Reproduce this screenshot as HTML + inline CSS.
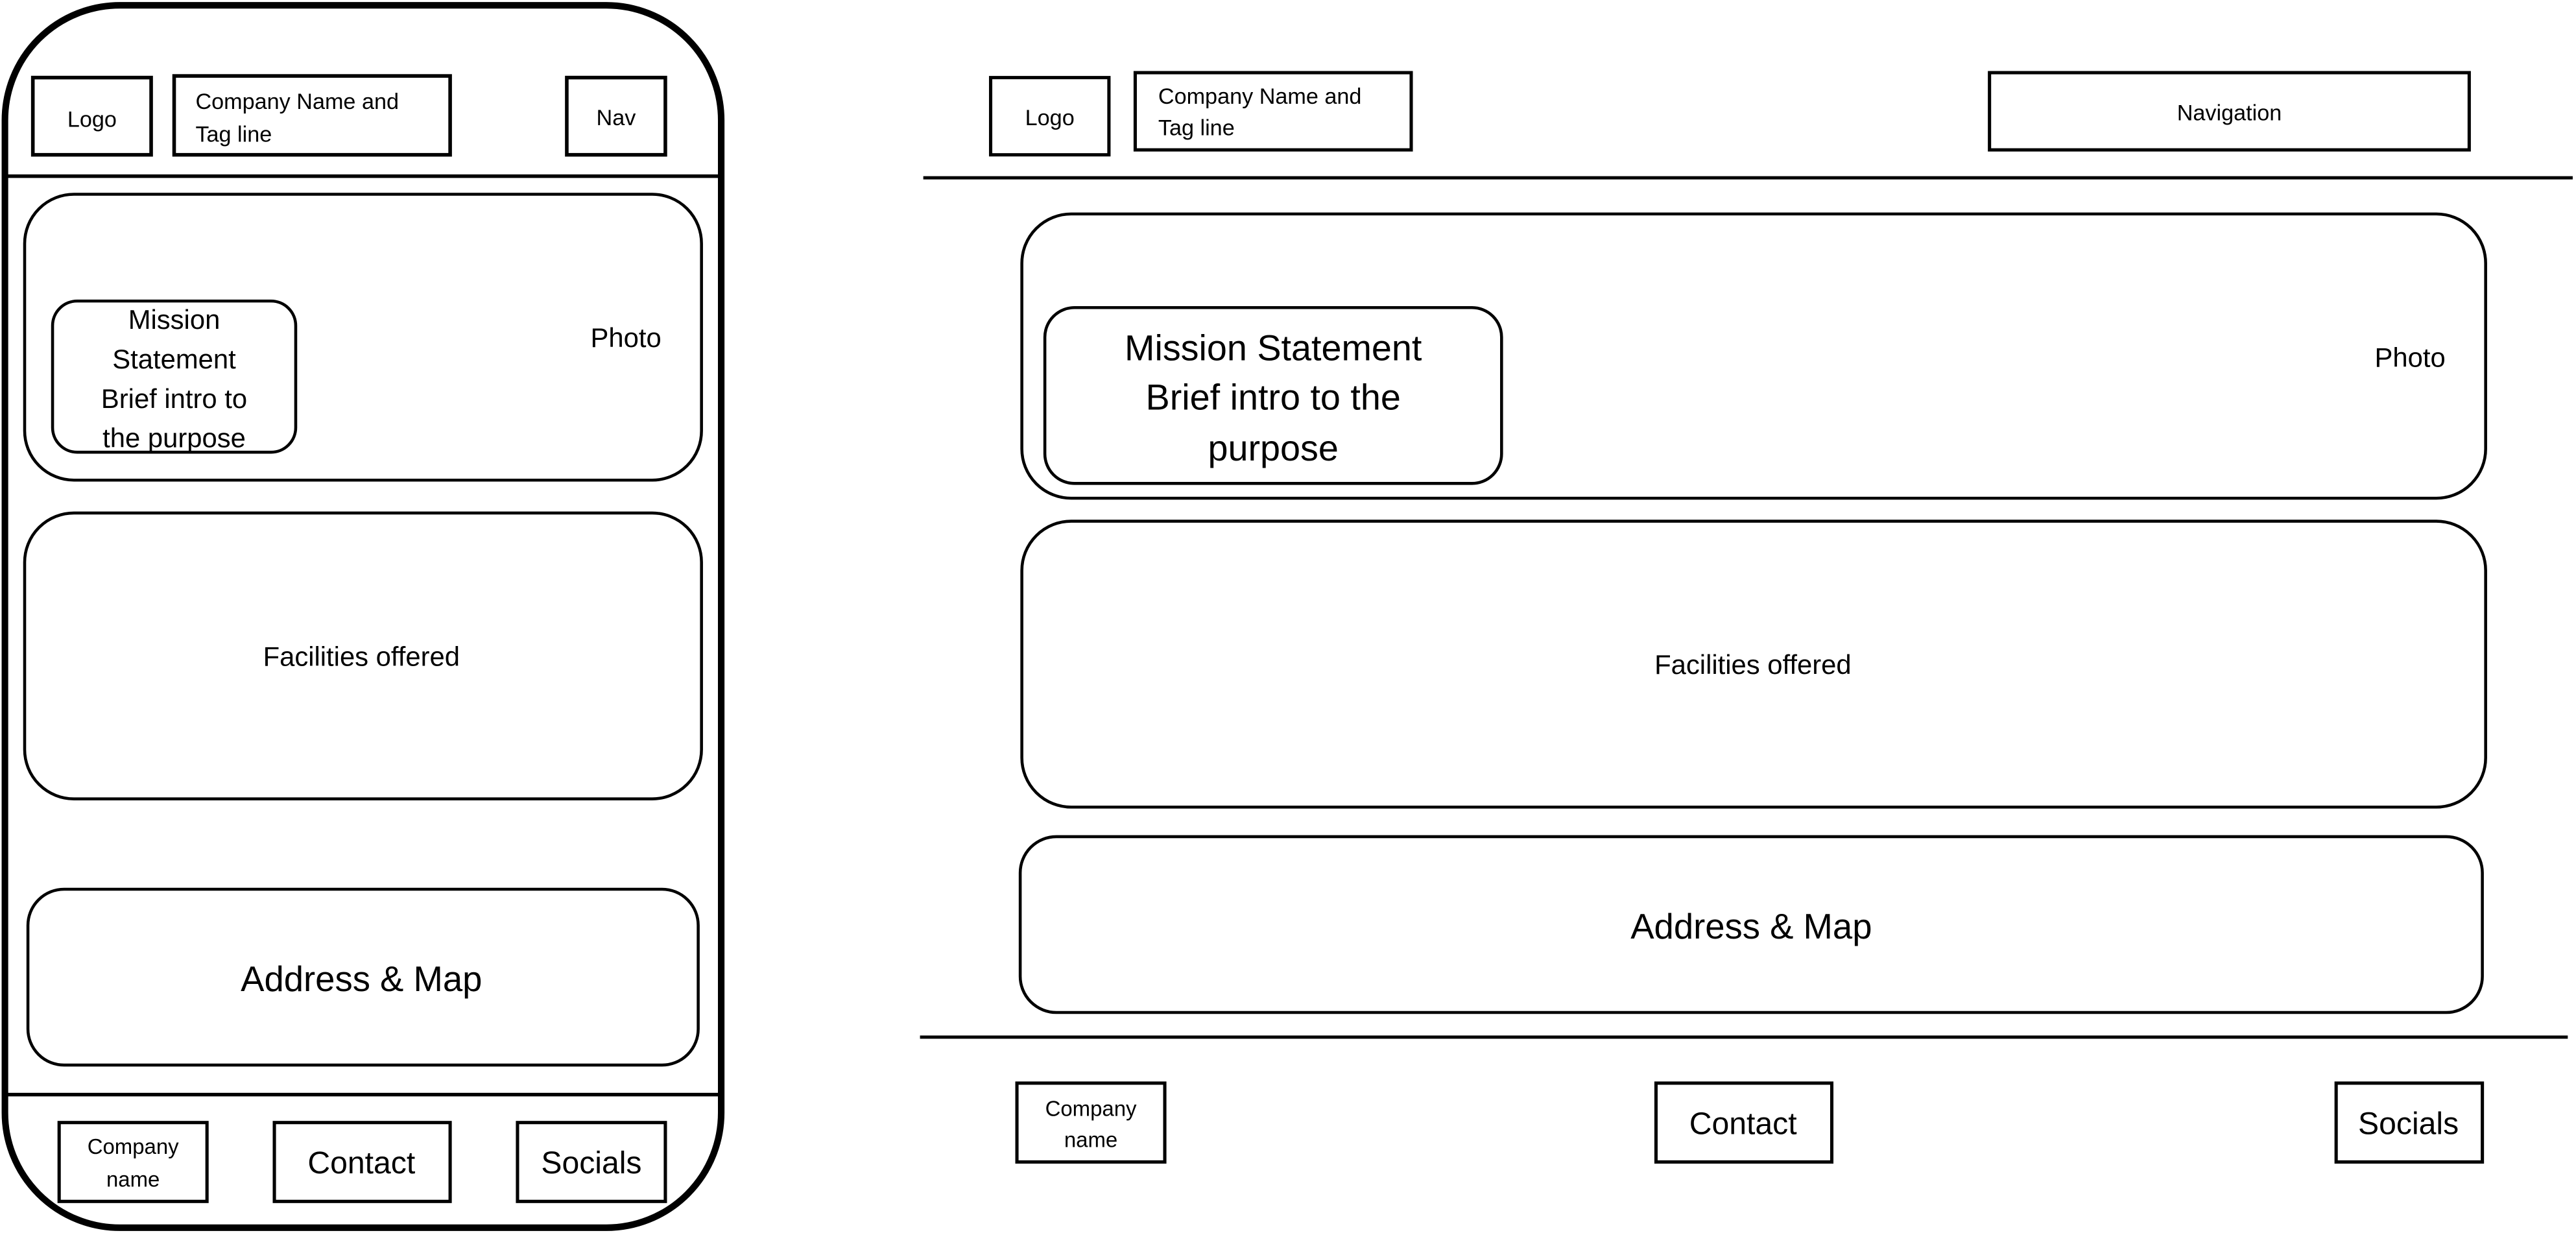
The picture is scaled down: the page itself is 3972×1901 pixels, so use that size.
<!DOCTYPE html>
<html><head><meta charset="utf-8"><style>
html,body{margin:0;padding:0;background:#fff;}
svg{display:block;}
text{font-family:"Liberation Sans",sans-serif;fill:#000;}
</style></head><body>
<svg width="3972" height="1901" viewBox="0 0 1568 750" xmlns="http://www.w3.org/2000/svg">
<rect width="1568" height="750" fill="#fff"/>
<g fill="none" stroke="#000">
<!-- phone -->
<rect x="3" y="3" width="436" height="744" rx="70" ry="70" stroke-width="4"/>
<line x1="3" y1="107" x2="439" y2="107" stroke-width="2.2"/>
<line x1="3" y1="666" x2="439" y2="666" stroke-width="2.2"/>
<rect x="20" y="47" width="72" height="47" stroke-width="2.2"/>
<rect x="106" y="46" width="168" height="48" stroke-width="2.2"/>
<rect x="345" y="47" width="60" height="47" stroke-width="2.2"/>
<rect x="15" y="118" width="412" height="174" rx="30" stroke-width="1.8"/>
<rect x="32" y="183" width="148" height="92" rx="15" stroke-width="1.8"/>
<rect x="15" y="312" width="412" height="174" rx="30" stroke-width="1.8"/>
<rect x="17" y="541" width="408" height="107" rx="22" stroke-width="1.8"/>
<rect x="36" y="683" width="90" height="48" stroke-width="2"/>
<rect x="167" y="683" width="107" height="48" stroke-width="2"/>
<rect x="315" y="683" width="90" height="48" stroke-width="2"/>
<!-- desktop -->
<rect x="603" y="47" width="72" height="47" stroke-width="2"/>
<rect x="691" y="44" width="168" height="47" stroke-width="2"/>
<rect x="1211" y="44" width="292" height="47" stroke-width="2"/>
<line x1="562" y1="108" x2="1566" y2="108" stroke-width="2"/>
<rect x="622" y="130" width="891" height="173" rx="30" stroke-width="1.8"/>
<rect x="636" y="187" width="278" height="107" rx="18" stroke-width="1.8"/>
<rect x="622" y="317" width="891" height="174" rx="30" stroke-width="1.8"/>
<rect x="621" y="509" width="890" height="107" rx="22" stroke-width="1.8"/>
<line x1="560" y1="631" x2="1563" y2="631" stroke-width="2"/>
<rect x="619" y="659" width="90" height="48" stroke-width="2"/>
<rect x="1008" y="659" width="107" height="48" stroke-width="2"/>
<rect x="1422" y="659" width="89" height="48" stroke-width="2"/>
</g>
<g text-anchor="middle">
<text x="56" y="77" font-size="13.5">Logo</text>
<text x="375" y="76" font-size="13.5">Nav</text>
<text x="106" y="200" font-size="16.5">Mission</text>
<text x="106" y="224" font-size="16.5">Statement</text>
<text x="106" y="248" font-size="16.5">Brief intro to</text>
<text x="106" y="272" font-size="16.5">the purpose</text>
<text x="381" y="211" font-size="16.5">Photo</text>
<text x="220" y="405" font-size="16.5">Facilities offered</text>
<text x="220" y="603" font-size="21.5">Address &amp; Map</text>
<text x="81" y="702" font-size="13">Company</text>
<text x="81" y="722" font-size="13">name</text>
<text x="220" y="714" font-size="19">Contact</text>
<text x="360" y="714" font-size="19">Socials</text>

<text x="639" y="76" font-size="13.5">Logo</text>
<text x="1357" y="73" font-size="13.5">Navigation</text>
<text x="775" y="219" font-size="22">Mission Statement</text>
<text x="775" y="249" font-size="22">Brief intro to the</text>
<text x="775" y="280" font-size="22">purpose</text>
<text x="1467" y="223" font-size="16.5">Photo</text>
<text x="1067" y="410" font-size="16.5">Facilities offered</text>
<text x="1066" y="571" font-size="21.5">Address &amp; Map</text>
<text x="664" y="679" font-size="13">Company</text>
<text x="664" y="698" font-size="13">name</text>
<text x="1061" y="690" font-size="19">Contact</text>
<text x="1466" y="690" font-size="19">Socials</text>
</g>
<g text-anchor="start" font-size="13.5">
<text x="119" y="66">Company Name and</text>
<text x="119" y="86">Tag line</text>
<text x="705" y="63">Company Name and</text>
<text x="705" y="82">Tag line</text>
</g>
</svg>
</body></html>
